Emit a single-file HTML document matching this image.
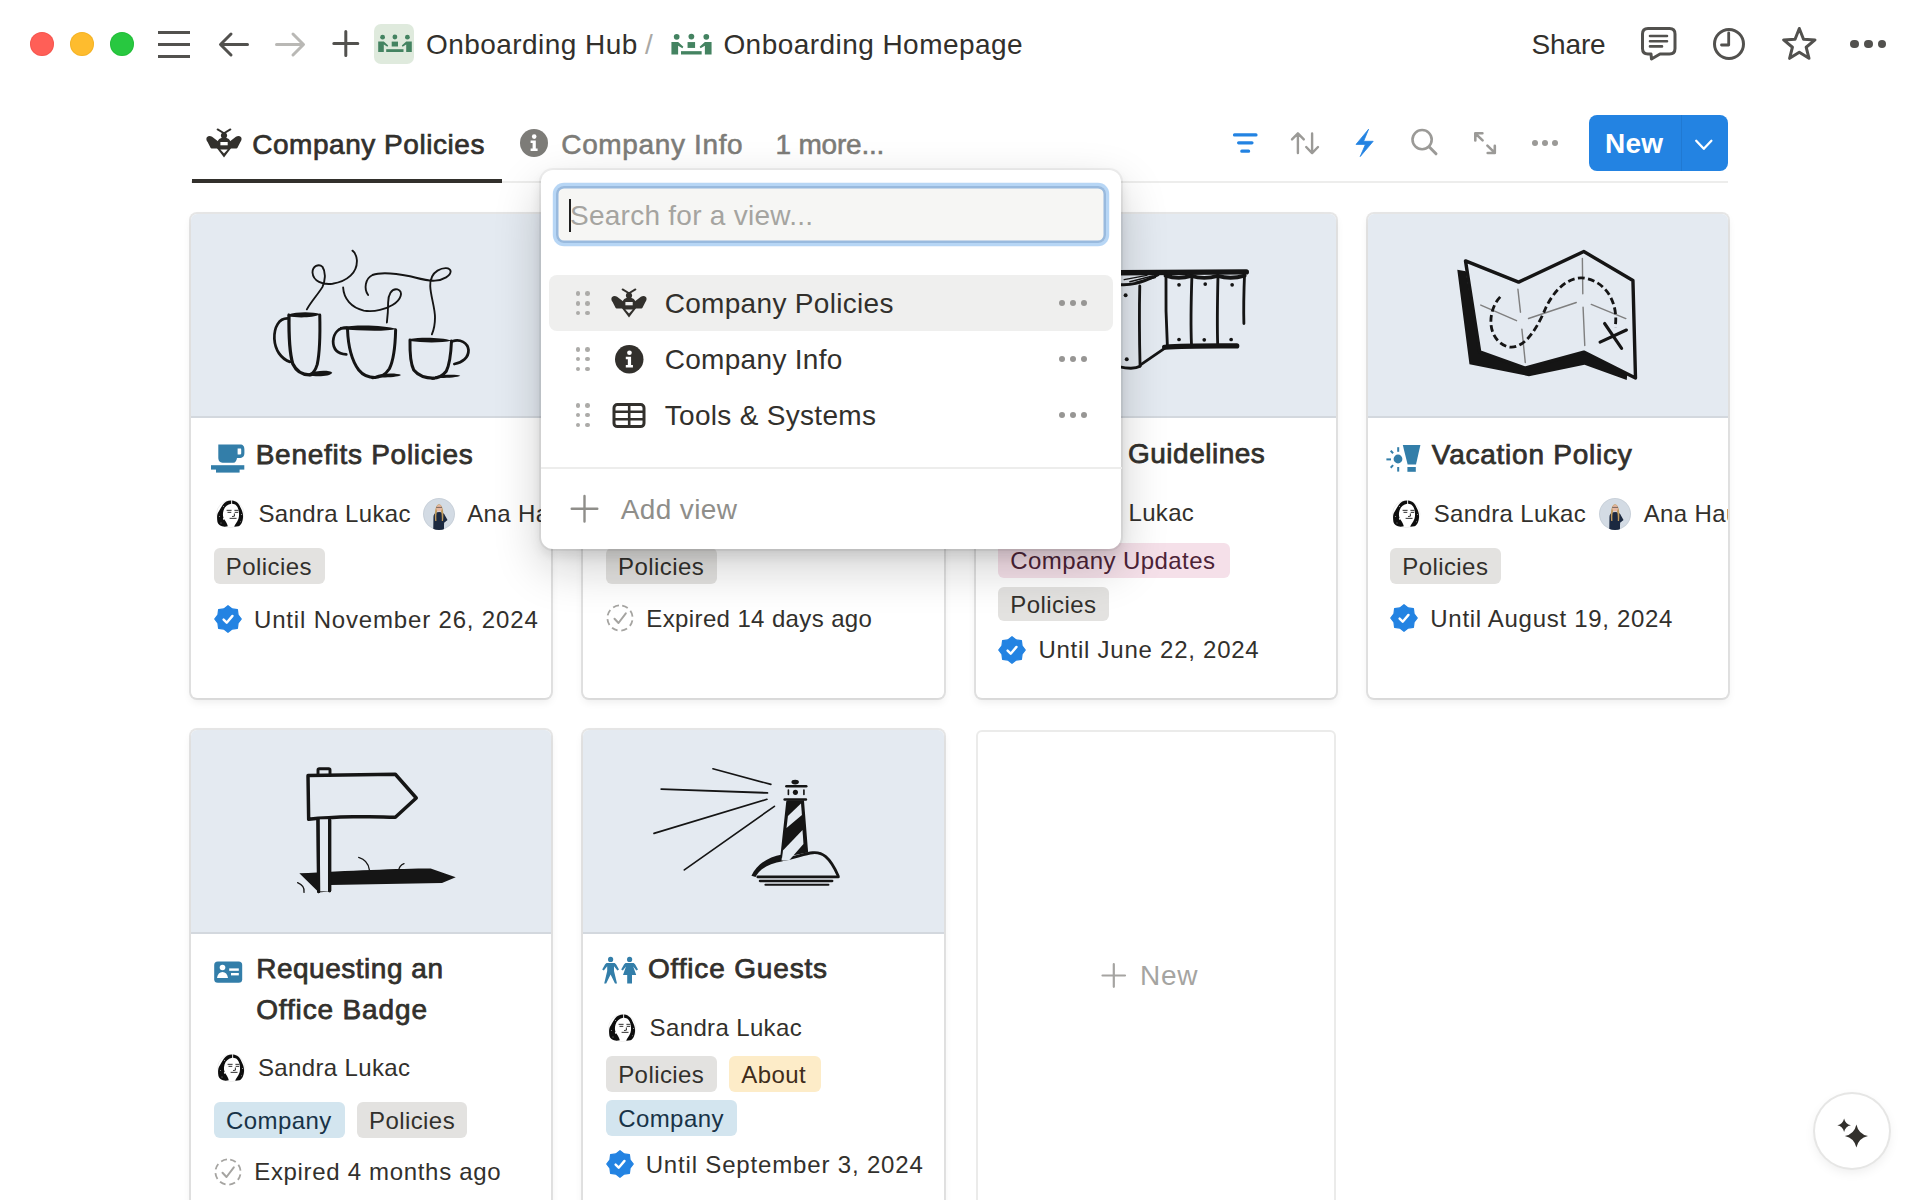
<!DOCTYPE html>
<html><head><meta charset="utf-8"><style>
html,body{margin:0;padding:0;}
body{width:1920px;height:1200px;position:relative;overflow:hidden;background:#fff;font-family:"Liberation Sans", sans-serif;color:#32302c;}
.t{position:absolute;white-space:nowrap;}
svg{display:block;}
</style></head><body>
<div style="position:absolute;left:30.00px;top:32.00px;width:24.00px;height:24.00px;border-radius:50%;background:#ff5f57;box-shadow:inset 0 0 0 1px #e2463f55;"></div><div style="position:absolute;left:70.00px;top:32.00px;width:24.00px;height:24.00px;border-radius:50%;background:#febc2e;box-shadow:inset 0 0 0 1px #e1a11655;"></div><div style="position:absolute;left:110.00px;top:32.00px;width:24.00px;height:24.00px;border-radius:50%;background:#28c840;box-shadow:inset 0 0 0 1px #1aab2955;"></div><div style="position:absolute;left:158.00px;top:30.50px;width:32.00px;height:3.00px;background:#52514e;"></div><div style="position:absolute;left:158.00px;top:42.50px;width:32.00px;height:3.00px;background:#52514e;"></div><div style="position:absolute;left:158.00px;top:54.50px;width:32.00px;height:3.00px;background:#52514e;"></div><svg style="position:absolute;left:214.00px;top:30.00px;overflow:visible;" width="40.00" height="30.00" viewBox="214 30 40 30"><path d="M247.5,44.5 H221 M231,34 L220.5,44.5 L231,55" fill="none" stroke="#52514e" stroke-width="3" stroke-linecap="round" stroke-linejoin="round"/></svg><svg style="position:absolute;left:272.00px;top:30.00px;overflow:visible;" width="40.00" height="30.00" viewBox="272 30 40 30"><path d="M276.5,44.5 H303 M293,34 L303.5,44.5 L293,55" fill="none" stroke="#b9b8b5" stroke-width="3" stroke-linecap="round" stroke-linejoin="round"/></svg><svg style="position:absolute;left:330.00px;top:28.00px;overflow:visible;" width="32.00" height="32.00" viewBox="330 28 32 32"><path d="M345.8,31.5 V55.5 M333.8,43.5 H357.8" fill="none" stroke="#52514e" stroke-width="3" stroke-linecap="round"/></svg><div style="position:absolute;left:374.00px;top:24.00px;width:40.00px;height:40.00px;border-radius:7px;background:#dfeadd;"></div><svg style="position:absolute;left:377.50px;top:33.60px;overflow:visible;" width="34.00" height="18.00" viewBox="0 0 34 18"><g fill="#448361"><circle cx="4.6" cy="3.2" r="2.4"/><circle cx="16.9" cy="3.0" r="2.4"/><circle cx="29.4" cy="3.2" r="2.4"/><path d="M0.2,7.6 H5.8 L10.2,11.6 L9.4,12.8 L5.8,10.6 V18 H0.2 Z"/><rect x="13.7" y="7.6" width="6.3" height="4.9"/><rect x="8.2" y="15.2" width="17.3" height="2.8"/><path d="M33.8,7.6 H28.2 L23.8,11.6 L24.6,12.8 L28.2,10.6 V18 H33.8 Z"/></g></svg><div class="t" style="left:426.00px;top:31.00px;font-size:28px;line-height:28px;color:#32302c;letter-spacing:0.450px;font-weight:400;">Onboarding Hub</div><div class="t" style="left:645.00px;top:31.00px;font-size:28px;line-height:28px;color:#a9a8a4;letter-spacing:0.090px;font-weight:400;">/</div><svg style="position:absolute;left:670.50px;top:32.60px;overflow:visible;" width="41.00" height="21.50" viewBox="0 0 34 18"><g fill="#448361"><circle cx="4.6" cy="3.2" r="2.4"/><circle cx="16.9" cy="3.0" r="2.4"/><circle cx="29.4" cy="3.2" r="2.4"/><path d="M0.2,7.6 H5.8 L10.2,11.6 L9.4,12.8 L5.8,10.6 V18 H0.2 Z"/><rect x="13.7" y="7.6" width="6.3" height="4.9"/><rect x="8.2" y="15.2" width="17.3" height="2.8"/><path d="M33.8,7.6 H28.2 L23.8,11.6 L24.6,12.8 L28.2,10.6 V18 H33.8 Z"/></g></svg><div class="t" style="left:723.40px;top:31.00px;font-size:28px;line-height:28px;color:#32302c;letter-spacing:0.450px;font-weight:400;">Onboarding Homepage</div><div class="t" style="left:1531.40px;top:31.00px;font-size:28px;line-height:28px;color:#32302c;letter-spacing:-0.110px;font-weight:400;">Share</div><svg style="position:absolute;left:1636.00px;top:24.00px;overflow:visible;" width="46.00" height="40.00" viewBox="1636 24 46 40"><path d="M1648,28.5 H1669.5 Q1675,28.5 1675,34 V48.5 Q1675,54 1669.5,54 H1660 L1651.5,59 L1651,54 H1648 Q1642.5,54 1642.5,48.5 V34 Q1642.5,28.5 1648,28.5 Z" fill="none" stroke="#52514e" stroke-width="3" stroke-linejoin="round"/><path d="M1650,36 H1667 M1650,41.2 H1667 M1650,46.4 H1662" stroke="#52514e" stroke-width="2.6" stroke-linecap="round"/></svg><svg style="position:absolute;left:1708.00px;top:23.00px;overflow:visible;" width="42.00" height="42.00" viewBox="1708 23 42 42"><circle cx="1729" cy="44" r="14.5" fill="none" stroke="#52514e" stroke-width="3"/><path d="M1728.7,33 V45 H1721.5" fill="none" stroke="#52514e" stroke-width="2.8" stroke-linecap="round" stroke-linejoin="round"/></svg><svg style="position:absolute;left:1776.00px;top:22.00px;overflow:visible;" width="46.00" height="46.00" viewBox="1776 22 46 46"><polygon points="1799.30,28.50 1803.53,39.18 1814.99,39.90 1806.15,47.22 1809.00,58.35 1799.30,52.20 1789.60,58.35 1792.45,47.22 1783.61,39.90 1795.07,39.18" fill="none" stroke="#52514e" stroke-width="3" stroke-linejoin="round"/></svg><div style="position:absolute;left:1850.00px;top:39.70px;width:8.60px;height:8.60px;border-radius:50%;background:#52514e;"></div><div style="position:absolute;left:1864.00px;top:39.70px;width:8.60px;height:8.60px;border-radius:50%;background:#52514e;"></div><div style="position:absolute;left:1877.50px;top:39.70px;width:8.60px;height:8.60px;border-radius:50%;background:#52514e;"></div><svg style="position:absolute;left:200.00px;top:122.00px;overflow:visible;" width="48.00" height="40.00" viewBox="0 0 48 40"><g fill="#32302c"><path d="M17.6,7.4 L24,11.2 L30.4,7.4" fill="none" stroke="#32302c" stroke-width="1.9" stroke-linecap="round" stroke-linejoin="round"/><circle cx="24" cy="13.6" r="3.1"/><path d="M17.3,27 V21.2 C17.3,17.6 20.3,15.4 24,15.4 C27.7,15.4 30.7,17.6 30.7,21.2 V27 Z"/><path d="M9.3,13.9 C6.3,14.0 5.5,17.4 7.6,20.0 L10.4,25.6 C10.7,26.4 11.3,26.6 12,26.6 L18.6,26.6 L18.6,19.8 L12.1,14.7 C11.4,14.2 10.4,13.9 9.3,13.9 Z"/><path d="M38.7,13.9 C41.7,14.0 42.5,17.4 40.4,20.0 L37.6,25.6 C37.3,26.4 36.7,26.6 36,26.6 L29.4,26.6 L29.4,19.8 L35.9,14.7 C36.6,14.2 37.6,13.9 38.7,13.9 Z"/><path d="M17.2,26.4 L24,35.6 L30.8,26.4 Z"/><rect x="20.4" y="20" width="7.3" height="3.3" fill="#ffffff"/><path d="M20.3,27.4 L24,31.4 L27.7,27.4 Z" fill="#ffffff"/></g></svg><div class="t" style="left:252.20px;top:131.00px;font-size:28px;line-height:28px;color:#32302c;letter-spacing:0.540px;font-weight:400;-webkit-text-stroke:0.7px #32302c;">Company Policies</div><div style="position:absolute;left:191.00px;top:181.00px;width:1537.00px;height:2.00px;background:#ededec;"></div><div style="position:absolute;left:192.00px;top:179.00px;width:310.00px;height:4.00px;background:#32302c;"></div><svg style="position:absolute;left:520.00px;top:129.00px;overflow:visible;" width="28.00" height="28.00" viewBox="0 0 28 28"><circle cx="14" cy="14" r="14" fill="#7d7c78"/><circle cx="14.2" cy="7.6" r="2.3" fill="#ffffff"/><path d="M10.6,11.6 H15.8 V19.6 H17.6 V22 H10.6 V19.6 H12.6 V14 H10.6 Z" fill="#ffffff"/></svg><div class="t" style="left:561.30px;top:131.00px;font-size:28px;line-height:28px;color:#7d7c78;letter-spacing:0.640px;font-weight:400;-webkit-text-stroke:0.55px #7d7c78;">Company Info</div><div class="t" style="left:775.50px;top:131.00px;font-size:28px;line-height:28px;color:#7d7c78;letter-spacing:-0.210px;font-weight:400;-webkit-text-stroke:0.55px #7d7c78;">1 more...</div><svg style="position:absolute;left:1228.00px;top:128.00px;overflow:visible;" width="34.00" height="30.00" viewBox="1228 128 34 30"><path d="M1234.5,134.9 H1256 M1238.6,142.8 H1252 M1241.8,151.2 H1248.6" stroke="#2383e2" stroke-width="3.2" stroke-linecap="round"/></svg><svg style="position:absolute;left:1286.00px;top:128.00px;overflow:visible;" width="38.00" height="30.00" viewBox="1286 128 38 30"><path d="M1297.9,133.5 V153 M1292,139.4 L1297.9,133.3 L1303.8,139.4 M1312.1,133.5 V153 M1306.2,147 L1312.1,153.2 L1318,147" fill="none" stroke="#9b9a97" stroke-width="2.4" stroke-linecap="round" stroke-linejoin="round"/></svg><svg style="position:absolute;left:1350.00px;top:126.00px;overflow:visible;" width="30.00" height="34.00" viewBox="1350 126 30 34"><path d="M1368.6,129.2 L1356,144.4 L1365.4,144.4 L1360.2,156.6 L1373.2,141.3 L1363.6,141.3 Z" fill="#2383e2" stroke="#2383e2" stroke-width="0.8" stroke-linejoin="round"/></svg><svg style="position:absolute;left:1406.00px;top:126.00px;overflow:visible;" width="36.00" height="34.00" viewBox="1406 126 36 34"><circle cx="1422.1" cy="139.6" r="9.6" fill="none" stroke="#9b9a97" stroke-width="2.6"/><path d="M1429.3,147 L1436,153.8" stroke="#9b9a97" stroke-width="3" stroke-linecap="round"/></svg><svg style="position:absolute;left:1468.00px;top:128.00px;overflow:visible;" width="34.00" height="30.00" viewBox="1468 128 34 30"><path d="M1482.6,140.4 L1475.5,133.6 M1475.3,140.4 V133.3 H1482.4 M1487.4,145.6 L1494.6,152.6 M1494.8,145.9 V153 H1487.7" fill="none" stroke="#9b9a97" stroke-width="2.6" stroke-linecap="round" stroke-linejoin="round"/></svg><div style="position:absolute;left:1531.90px;top:139.60px;width:6.40px;height:6.40px;border-radius:50%;background:#9b9a97;"></div><div style="position:absolute;left:1541.90px;top:139.60px;width:6.40px;height:6.40px;border-radius:50%;background:#9b9a97;"></div><div style="position:absolute;left:1551.90px;top:139.60px;width:6.40px;height:6.40px;border-radius:50%;background:#9b9a97;"></div><div style="position:absolute;left:1589.00px;top:115.00px;width:139.00px;height:56.00px;border-radius:8px;background:#2383e2;"></div><div style="position:absolute;left:1680.50px;top:115.00px;width:1.50px;height:56.00px;background:rgba(0,0,0,0.07);"></div><div class="t" style="left:1605.00px;top:130.00px;font-size:28px;line-height:28px;color:#ffffff;letter-spacing:0.290px;font-weight:700;">New</div><svg style="position:absolute;left:1690.00px;top:134.00px;overflow:visible;" width="26.00" height="20.00" viewBox="1690 134 26 20"><path d="M1696.2,140.8 L1703.8,148.8 L1711.4,140.8" fill="none" stroke="#fff" stroke-width="2.3" stroke-linecap="round" stroke-linejoin="round"/></svg><div style="position:absolute;left:191.00px;top:214.00px;width:360.33px;height:484.00px;border-radius:6px;background:#fff;box-shadow:0 0 0 2px rgba(15,15,15,0.1),0 4px 8px rgba(15,15,15,0.08);overflow:hidden;"></div><div style="position:absolute;left:191.00px;top:214.00px;width:360.33px;height:202.00px;border-radius:6px 6px 0 0;background:#e4eaf1;"></div><div style="position:absolute;left:191.00px;top:416.00px;width:360.33px;height:2.00px;background:#d3d8de;"></div><svg style="position:absolute;left:205.00px;top:440.70px;overflow:visible;" width="50.00" height="40.00" viewBox="0 0 50 40"><g fill="#337ea9"><path d="M13.3,3.6 H35 C38.3,3.6 39.4,5.6 39.4,8.6 V12 C39.4,15.6 37.6,17 34.4,17 H32 C31.6,19.6 30.6,21.8 28.2,21.8 H17.6 C14.6,21.8 13.3,19.6 13.3,16.6 Z"/><path d="M32.6,7.6 V13.4 H35.2 C36,13.4 36.2,13 36.2,12 V8.6 C36.2,7.8 36,7.6 35.2,7.6 Z" fill="#fff"/><rect x="6" y="24.2" width="33.3" height="4.4"/><path d="M11,28 H34.6 L34.6,31.6 H11 Z"/></g></svg><div class="t" style="left:255.70px;top:441.00px;font-size:28px;line-height:28px;color:#32302c;letter-spacing:0.728px;font-weight:400;-webkit-text-stroke:0.75px #32302c;">Benefits Policies</div><svg style="position:absolute;left:212.00px;top:496.00px;overflow:visible;" width="36.00" height="36.00" viewBox="0 0 1200 1200"><circle cx="610" cy="600" r="455" fill="#fff" stroke="rgba(0,0,0,0.07)" stroke-width="30"/><path d="M640,150 C520,150 420,200 360,290 C290,390 250,480 200,560 C160,640 165,760 180,860 C200,960 300,1020 420,1022 L525,1012 C520,950 480,880 425,800 C365,720 345,600 385,480 C425,360 520,285 640,262 Z" fill="#0d0d0d"/><path d="M670,150 C800,160 900,250 950,380 C1000,480 1035,560 1035,680 C1035,820 985,960 885,1010 L740,1022 C760,950 840,880 882,760 C922,640 902,420 822,330 C772,280 722,266 670,262 Z" fill="#0d0d0d"/><g fill="#fff"><circle cx="390" cy="760" r="28"/><circle cx="245" cy="680" r="16"/><circle cx="385" cy="350" r="16"/><circle cx="985" cy="620" r="16"/><circle cx="300" cy="900" r="14"/><circle cx="950" cy="860" r="14"/></g><path d="M500,478 H640 M760,478 H868 M530,545 H630 M770,545 H860 M745,595 L748,672 L682,682 M600,745 H805" stroke="#161616" stroke-width="30" fill="none" stroke-linecap="round"/></svg><div class="t" style="left:258.40px;top:502.00px;font-size:24px;line-height:24px;color:#32302c;letter-spacing:0.360px;font-weight:400;">Sandra Lukac</div><svg style="position:absolute;left:422.50px;top:497.80px;overflow:visible;" width="32.00" height="32.00" viewBox="0 0 30 30"><defs><clipPath id="ac422"><circle cx="15" cy="15" r="15"/></clipPath></defs><g clip-path="url(#ac422)"><rect width="30" height="30" fill="#d3dbe4"/><path d="M9.6,30 L9.8,18 C10,14.5 12,13.4 15,13.2 C18,13.4 20,14.5 20.6,16.5 L23,20.6 L19.8,23.2 L19.6,30 Z" fill="#1b2940"/><path d="M11.4,21.5 C10.6,14 11.4,6.2 15,5.8 C18.8,6.2 19.6,14 18.8,21.5 L17.6,21.5 C17.8,16 17.4,11 15,11 C12.6,11 12.4,16 12.6,21.5 Z" fill="#c09a5c"/><ellipse cx="15.1" cy="9.6" rx="2.6" ry="3.1" fill="#e6b8a2"/><path d="M12.4,8.8 H17.8" stroke="#333" stroke-width="0.6"/></g><circle cx="15" cy="15" r="14.6" fill="none" stroke="rgba(0,0,0,0.06)" stroke-width="0.8"/></svg><div style="position:absolute;left:191px;top:490px;width:360px;height:40px;overflow:hidden;"><div class="t" style="left:276.20px;top:12.00px;font-size:24px;line-height:24px;color:#32302c;letter-spacing:0.360px;font-weight:400;">Ana Hauptmann</div></div><div style="position:absolute;left:213.80px;top:548.00px;width:110.90px;height:35.50px;border-radius:6px;background:#e3e2e0;"></div><div class="t" style="left:225.80px;top:555.00px;font-size:24px;line-height:24px;color:#32302c;letter-spacing:0.420px;font-weight:400;">Policies</div><svg style="position:absolute;left:213.80px;top:605.00px;overflow:visible;" width="28.00" height="28.00" viewBox="0 0 28 28"><polygon points="14.00,0.70 18.17,3.93 23.40,4.60 24.07,9.83 27.30,14.00 24.07,18.17 23.40,23.40 18.17,24.07 14.00,27.30 9.83,24.07 4.60,23.40 3.93,18.17 0.70,14.00 3.93,9.83 4.60,4.60 9.83,3.93" fill="#2383e2" stroke="#2383e2" stroke-width="1.2" stroke-linejoin="round"/><path d="M9.6,14.6 L12.7,17.7 L18.5,10.9" fill="none" stroke="#fff" stroke-width="2.4" stroke-linecap="round" stroke-linejoin="round"/></svg><div class="t" style="left:254.00px;top:608.00px;font-size:24px;line-height:24px;color:#32302c;letter-spacing:0.830px;font-weight:400;">Until November 26, 2024</div><div style="position:absolute;left:583.33px;top:214.00px;width:360.33px;height:484.00px;border-radius:6px;background:#fff;box-shadow:0 0 0 2px rgba(15,15,15,0.1),0 4px 8px rgba(15,15,15,0.08);overflow:hidden;"></div><div style="position:absolute;left:583.33px;top:214.00px;width:360.33px;height:202.00px;border-radius:6px 6px 0 0;background:#e4eaf1;"></div><div style="position:absolute;left:583.33px;top:416.00px;width:360.33px;height:2.00px;background:#d3d8de;"></div><div style="position:absolute;left:606.10px;top:548.00px;width:110.60px;height:35.50px;border-radius:6px;background:#e3e2e0;"></div><div class="t" style="left:618.10px;top:555.00px;font-size:24px;line-height:24px;color:#32302c;letter-spacing:0.420px;font-weight:400;">Policies</div><svg style="position:absolute;left:606.00px;top:604.00px;overflow:visible;" width="28.00" height="28.00" viewBox="0 0 28 28"><circle cx="14" cy="14" r="12.6" fill="none" stroke="#a5a4a1" stroke-width="1.8" stroke-dasharray="6.1 3.8" transform="rotate(-80 14 14)"/><path d="M8.5,14.7 L12.5,19 L19.8,9.4" fill="none" stroke="#a5a4a1" stroke-width="2" stroke-linecap="round" stroke-linejoin="round"/></svg><div class="t" style="left:646.30px;top:607.00px;font-size:24px;line-height:24px;color:#32302c;letter-spacing:0.380px;font-weight:400;">Expired 14 days ago</div><div style="position:absolute;left:975.67px;top:214.00px;width:360.33px;height:484.00px;border-radius:6px;background:#fff;box-shadow:0 0 0 2px rgba(15,15,15,0.1),0 4px 8px rgba(15,15,15,0.08);overflow:hidden;"></div><div style="position:absolute;left:975.67px;top:214.00px;width:360.33px;height:202.00px;border-radius:6px 6px 0 0;background:#e4eaf1;"></div><div style="position:absolute;left:975.67px;top:416.00px;width:360.33px;height:2.00px;background:#d3d8de;"></div><div class="t" style="left:1128.00px;top:440.00px;font-size:28px;line-height:28px;color:#32302c;letter-spacing:0.497px;font-weight:400;-webkit-text-stroke:0.75px #32302c;">Guidelines</div><div class="t" style="left:1128.60px;top:501.00px;font-size:24px;line-height:24px;color:#32302c;letter-spacing:0.290px;font-weight:400;">Lukac</div><div style="position:absolute;left:998.30px;top:542.50px;width:231.70px;height:35.00px;border-radius:6px;background:#f5e0e9;"></div><div class="t" style="left:1010.30px;top:549.00px;font-size:24px;line-height:24px;color:#4c2337;letter-spacing:0.420px;font-weight:400;">Company Updates</div><div style="position:absolute;left:998.30px;top:586.70px;width:110.50px;height:34.60px;border-radius:6px;background:#e3e2e0;"></div><div class="t" style="left:1010.30px;top:593.00px;font-size:24px;line-height:24px;color:#32302c;letter-spacing:0.420px;font-weight:400;">Policies</div><svg style="position:absolute;left:998.30px;top:636.20px;overflow:visible;" width="28.00" height="28.00" viewBox="0 0 28 28"><polygon points="14.00,0.70 18.17,3.93 23.40,4.60 24.07,9.83 27.30,14.00 24.07,18.17 23.40,23.40 18.17,24.07 14.00,27.30 9.83,24.07 4.60,23.40 3.93,18.17 0.70,14.00 3.93,9.83 4.60,4.60 9.83,3.93" fill="#2383e2" stroke="#2383e2" stroke-width="1.2" stroke-linejoin="round"/><path d="M9.6,14.6 L12.7,17.7 L18.5,10.9" fill="none" stroke="#fff" stroke-width="2.4" stroke-linecap="round" stroke-linejoin="round"/></svg><div class="t" style="left:1038.40px;top:638.00px;font-size:24px;line-height:24px;color:#32302c;letter-spacing:0.750px;font-weight:400;">Until June 22, 2024</div><div style="position:absolute;left:1368.00px;top:214.00px;width:360.33px;height:484.00px;border-radius:6px;background:#fff;box-shadow:0 0 0 2px rgba(15,15,15,0.1),0 4px 8px rgba(15,15,15,0.08);overflow:hidden;"></div><div style="position:absolute;left:1368.00px;top:214.00px;width:360.33px;height:202.00px;border-radius:6px 6px 0 0;background:#e4eaf1;"></div><div style="position:absolute;left:1368.00px;top:416.00px;width:360.33px;height:2.00px;background:#d3d8de;"></div><svg style="position:absolute;left:1380.00px;top:440.50px;overflow:visible;" width="50.00" height="40.00" viewBox="0 0 50 40"><g fill="#337ea9"><path d="M22.8,4 H40.4 L36,23.4 H27.6 Z"/><rect x="27.4" y="26" width="8.4" height="4.8"/><circle cx="18" cy="18" r="4.4"/><rect x="17.2" y="6.2" width="2" height="4.6"/><rect x="17.2" y="26" width="2" height="4.6"/><rect x="6.4" y="17.4" width="4.6" height="2"/><path d="M10,10.4 L11.4,9 L13.8,11.6 L12.4,13 Z"/><path d="M10,26 L11.4,27.4 L13.8,24.8 L12.4,23.4 Z"/></g></svg><div class="t" style="left:1431.80px;top:441.00px;font-size:28px;line-height:28px;color:#32302c;letter-spacing:0.752px;font-weight:400;-webkit-text-stroke:0.75px #32302c;">Vacation Policy</div><svg style="position:absolute;left:1388.00px;top:496.30px;overflow:visible;" width="36.00" height="36.00" viewBox="0 0 1200 1200"><circle cx="610" cy="600" r="455" fill="#fff" stroke="rgba(0,0,0,0.07)" stroke-width="30"/><path d="M640,150 C520,150 420,200 360,290 C290,390 250,480 200,560 C160,640 165,760 180,860 C200,960 300,1020 420,1022 L525,1012 C520,950 480,880 425,800 C365,720 345,600 385,480 C425,360 520,285 640,262 Z" fill="#0d0d0d"/><path d="M670,150 C800,160 900,250 950,380 C1000,480 1035,560 1035,680 C1035,820 985,960 885,1010 L740,1022 C760,950 840,880 882,760 C922,640 902,420 822,330 C772,280 722,266 670,262 Z" fill="#0d0d0d"/><g fill="#fff"><circle cx="390" cy="760" r="28"/><circle cx="245" cy="680" r="16"/><circle cx="385" cy="350" r="16"/><circle cx="985" cy="620" r="16"/><circle cx="300" cy="900" r="14"/><circle cx="950" cy="860" r="14"/></g><path d="M500,478 H640 M760,478 H868 M530,545 H630 M770,545 H860 M745,595 L748,672 L682,682 M600,745 H805" stroke="#161616" stroke-width="30" fill="none" stroke-linecap="round"/></svg><div class="t" style="left:1433.70px;top:502.00px;font-size:24px;line-height:24px;color:#32302c;letter-spacing:0.360px;font-weight:400;">Sandra Lukac</div><svg style="position:absolute;left:1599.00px;top:497.80px;overflow:visible;" width="32.00" height="32.00" viewBox="0 0 30 30"><defs><clipPath id="ac1599"><circle cx="15" cy="15" r="15"/></clipPath></defs><g clip-path="url(#ac1599)"><rect width="30" height="30" fill="#d3dbe4"/><path d="M9.6,30 L9.8,18 C10,14.5 12,13.4 15,13.2 C18,13.4 20,14.5 20.6,16.5 L23,20.6 L19.8,23.2 L19.6,30 Z" fill="#1b2940"/><path d="M11.4,21.5 C10.6,14 11.4,6.2 15,5.8 C18.8,6.2 19.6,14 18.8,21.5 L17.6,21.5 C17.8,16 17.4,11 15,11 C12.6,11 12.4,16 12.6,21.5 Z" fill="#c09a5c"/><ellipse cx="15.1" cy="9.6" rx="2.6" ry="3.1" fill="#e6b8a2"/><path d="M12.4,8.8 H17.8" stroke="#333" stroke-width="0.6"/></g><circle cx="15" cy="15" r="14.6" fill="none" stroke="rgba(0,0,0,0.06)" stroke-width="0.8"/></svg><div style="position:absolute;left:1368px;top:490px;width:360.33px;height:40px;overflow:hidden;"><div class="t" style="left:275.70px;top:12.00px;font-size:24px;line-height:24px;color:#32302c;letter-spacing:0.360px;font-weight:400;">Ana Hauptmann</div></div><div style="position:absolute;left:1390.25px;top:548.10px;width:110.45px;height:35.50px;border-radius:6px;background:#e3e2e0;"></div><div class="t" style="left:1402.25px;top:555.00px;font-size:24px;line-height:24px;color:#32302c;letter-spacing:0.420px;font-weight:400;">Policies</div><svg style="position:absolute;left:1390.25px;top:604.40px;overflow:visible;" width="28.00" height="28.00" viewBox="0 0 28 28"><polygon points="14.00,0.70 18.17,3.93 23.40,4.60 24.07,9.83 27.30,14.00 24.07,18.17 23.40,23.40 18.17,24.07 14.00,27.30 9.83,24.07 4.60,23.40 3.93,18.17 0.70,14.00 3.93,9.83 4.60,4.60 9.83,3.93" fill="#2383e2" stroke="#2383e2" stroke-width="1.2" stroke-linejoin="round"/><path d="M9.6,14.6 L12.7,17.7 L18.5,10.9" fill="none" stroke="#fff" stroke-width="2.4" stroke-linecap="round" stroke-linejoin="round"/></svg><div class="t" style="left:1430.30px;top:607.00px;font-size:24px;line-height:24px;color:#32302c;letter-spacing:0.700px;font-weight:400;">Until August 19, 2024</div><div style="position:absolute;left:191.00px;top:729.50px;width:360.33px;height:500.00px;border-radius:6px;background:#fff;box-shadow:0 0 0 2px rgba(15,15,15,0.1),0 4px 8px rgba(15,15,15,0.08);overflow:hidden;"></div><div style="position:absolute;left:191.00px;top:729.50px;width:360.33px;height:202.00px;border-radius:6px 6px 0 0;background:#e4eaf1;"></div><div style="position:absolute;left:191.00px;top:931.50px;width:360.33px;height:2.00px;background:#d3d8de;"></div><svg style="position:absolute;left:208.00px;top:950.00px;overflow:visible;" width="40.00" height="40.00" viewBox="0 0 40 40"><rect x="6.2" y="11.4" width="28" height="21.4" rx="3.6" fill="#337ea9"/><g fill="#fff"><circle cx="14.5" cy="17.5" r="2.8"/><path d="M9,28 C9.5,24 11.6,22 14.5,22 C17.4,22 19.5,24 20,28 Z"/><rect x="21.2" y="18.4" width="9.6" height="2.4"/><rect x="23" y="23" width="7.8" height="2.4"/></g></svg><div class="t" style="left:256.20px;top:955.00px;font-size:28px;line-height:28px;color:#32302c;letter-spacing:0.519px;font-weight:400;-webkit-text-stroke:0.75px #32302c;">Requesting an</div><div class="t" style="left:256.20px;top:996.00px;font-size:28px;line-height:28px;color:#32302c;letter-spacing:0.856px;font-weight:400;-webkit-text-stroke:0.75px #32302c;">Office Badge</div><svg style="position:absolute;left:212.50px;top:1049.60px;overflow:visible;" width="36.00" height="36.00" viewBox="0 0 1200 1200"><circle cx="610" cy="600" r="455" fill="#fff" stroke="rgba(0,0,0,0.07)" stroke-width="30"/><path d="M640,150 C520,150 420,200 360,290 C290,390 250,480 200,560 C160,640 165,760 180,860 C200,960 300,1020 420,1022 L525,1012 C520,950 480,880 425,800 C365,720 345,600 385,480 C425,360 520,285 640,262 Z" fill="#0d0d0d"/><path d="M670,150 C800,160 900,250 950,380 C1000,480 1035,560 1035,680 C1035,820 985,960 885,1010 L740,1022 C760,950 840,880 882,760 C922,640 902,420 822,330 C772,280 722,266 670,262 Z" fill="#0d0d0d"/><g fill="#fff"><circle cx="390" cy="760" r="28"/><circle cx="245" cy="680" r="16"/><circle cx="385" cy="350" r="16"/><circle cx="985" cy="620" r="16"/><circle cx="300" cy="900" r="14"/><circle cx="950" cy="860" r="14"/></g><path d="M500,478 H640 M760,478 H868 M530,545 H630 M770,545 H860 M745,595 L748,672 L682,682 M600,745 H805" stroke="#161616" stroke-width="30" fill="none" stroke-linecap="round"/></svg><div class="t" style="left:257.90px;top:1056.00px;font-size:24px;line-height:24px;color:#32302c;letter-spacing:0.360px;font-weight:400;">Sandra Lukac</div><div style="position:absolute;left:214.00px;top:1102.00px;width:130.90px;height:35.50px;border-radius:6px;background:#d3e5ef;"></div><div class="t" style="left:226.00px;top:1109.00px;font-size:24px;line-height:24px;color:#183347;letter-spacing:0.420px;font-weight:400;">Company</div><div style="position:absolute;left:357.00px;top:1102.00px;width:109.80px;height:35.50px;border-radius:6px;background:#e3e2e0;"></div><div class="t" style="left:369.00px;top:1109.00px;font-size:24px;line-height:24px;color:#32302c;letter-spacing:0.420px;font-weight:400;">Policies</div><svg style="position:absolute;left:213.80px;top:1158.00px;overflow:visible;" width="28.00" height="28.00" viewBox="0 0 28 28"><circle cx="14" cy="14" r="12.6" fill="none" stroke="#a5a4a1" stroke-width="1.8" stroke-dasharray="6.1 3.8" transform="rotate(-80 14 14)"/><path d="M8.5,14.7 L12.5,19 L19.8,9.4" fill="none" stroke="#a5a4a1" stroke-width="2" stroke-linecap="round" stroke-linejoin="round"/></svg><div class="t" style="left:254.20px;top:1160.00px;font-size:24px;line-height:24px;color:#32302c;letter-spacing:0.680px;font-weight:400;">Expired 4 months ago</div><div style="position:absolute;left:583.33px;top:729.50px;width:360.33px;height:500.00px;border-radius:6px;background:#fff;box-shadow:0 0 0 2px rgba(15,15,15,0.1),0 4px 8px rgba(15,15,15,0.08);overflow:hidden;"></div><div style="position:absolute;left:583.33px;top:729.50px;width:360.33px;height:202.00px;border-radius:6px 6px 0 0;background:#e4eaf1;"></div><div style="position:absolute;left:583.33px;top:931.50px;width:360.33px;height:2.00px;background:#d3d8de;"></div><svg style="position:absolute;left:598.00px;top:952.00px;overflow:visible;" width="45.00" height="40.00" viewBox="0 0 45 40"><g fill="#337ea9"><circle cx="12.6" cy="7.4" r="2.6"/><path d="M9.4,11 H15.8 C17,11 17.6,11.6 18.2,12.6 L21,17.6 L19.4,18.6 L16,14.2 L16,19 L19,31.4 H17 L12.6,22.6 L8.2,31.4 H6.2 L9.2,19 L9.2,14.2 L5.8,18.6 L4.2,17.6 L7,12.6 C7.6,11.6 8.2,11 9.4,11 Z"/><circle cx="31.6" cy="7.4" r="2.6"/><path d="M28.4,11 H34.8 C36,11 36.6,11.6 37.2,12.6 L40,17.6 L38.4,18.6 L35.2,14.4 L38.2,23 H34 V31.4 H29.2 V23 H25 L28,14.4 L24.8,18.6 L23.2,17.6 L26,12.6 C26.6,11.6 27.2,11 28.4,11 Z"/></g></svg><div class="t" style="left:647.90px;top:955.00px;font-size:28px;line-height:28px;color:#32302c;letter-spacing:0.841px;font-weight:400;-webkit-text-stroke:0.75px #32302c;">Office Guests</div><svg style="position:absolute;left:604.20px;top:1009.60px;overflow:visible;" width="36.00" height="36.00" viewBox="0 0 1200 1200"><circle cx="610" cy="600" r="455" fill="#fff" stroke="rgba(0,0,0,0.07)" stroke-width="30"/><path d="M640,150 C520,150 420,200 360,290 C290,390 250,480 200,560 C160,640 165,760 180,860 C200,960 300,1020 420,1022 L525,1012 C520,950 480,880 425,800 C365,720 345,600 385,480 C425,360 520,285 640,262 Z" fill="#0d0d0d"/><path d="M670,150 C800,160 900,250 950,380 C1000,480 1035,560 1035,680 C1035,820 985,960 885,1010 L740,1022 C760,950 840,880 882,760 C922,640 902,420 822,330 C772,280 722,266 670,262 Z" fill="#0d0d0d"/><g fill="#fff"><circle cx="390" cy="760" r="28"/><circle cx="245" cy="680" r="16"/><circle cx="385" cy="350" r="16"/><circle cx="985" cy="620" r="16"/><circle cx="300" cy="900" r="14"/><circle cx="950" cy="860" r="14"/></g><path d="M500,478 H640 M760,478 H868 M530,545 H630 M770,545 H860 M745,595 L748,672 L682,682 M600,745 H805" stroke="#161616" stroke-width="30" fill="none" stroke-linecap="round"/></svg><div class="t" style="left:649.60px;top:1016.00px;font-size:24px;line-height:24px;color:#32302c;letter-spacing:0.360px;font-weight:400;">Sandra Lukac</div><div style="position:absolute;left:606.20px;top:1056.30px;width:110.50px;height:35.30px;border-radius:6px;background:#e3e2e0;"></div><div class="t" style="left:618.20px;top:1063.00px;font-size:24px;line-height:24px;color:#32302c;letter-spacing:0.420px;font-weight:400;">Policies</div><div style="position:absolute;left:729.30px;top:1056.30px;width:91.40px;height:35.30px;border-radius:6px;background:#fdecc8;"></div><div class="t" style="left:741.30px;top:1063.00px;font-size:24px;line-height:24px;color:#402c1b;letter-spacing:0.420px;font-weight:400;">About</div><div style="position:absolute;left:606.20px;top:1100.30px;width:130.70px;height:35.30px;border-radius:6px;background:#d3e5ef;"></div><div class="t" style="left:618.20px;top:1107.00px;font-size:24px;line-height:24px;color:#183347;letter-spacing:0.420px;font-weight:400;">Company</div><svg style="position:absolute;left:606.00px;top:1150.00px;overflow:visible;" width="28.00" height="28.00" viewBox="0 0 28 28"><polygon points="14.00,0.70 18.17,3.93 23.40,4.60 24.07,9.83 27.30,14.00 24.07,18.17 23.40,23.40 18.17,24.07 14.00,27.30 9.83,24.07 4.60,23.40 3.93,18.17 0.70,14.00 3.93,9.83 4.60,4.60 9.83,3.93" fill="#2383e2" stroke="#2383e2" stroke-width="1.2" stroke-linejoin="round"/><path d="M9.6,14.6 L12.7,17.7 L18.5,10.9" fill="none" stroke="#fff" stroke-width="2.4" stroke-linecap="round" stroke-linejoin="round"/></svg><div class="t" style="left:645.70px;top:1153.00px;font-size:24px;line-height:24px;color:#32302c;letter-spacing:0.830px;font-weight:400;">Until September 3, 2024</div><div style="position:absolute;left:976.00px;top:729.50px;width:360.00px;height:500.00px;box-sizing:border-box;border:2px solid #ebebea;border-radius:6px;background:#fff;"></div><svg style="position:absolute;left:1100.00px;top:961.00px;overflow:visible;" width="28.00" height="28.00" viewBox="1100 961 28 28"><path d="M1113.8,964.2 V986.8 M1102.5,975.5 H1125" stroke="#a5a4a1" stroke-width="2.2" stroke-linecap="round"/></svg><div class="t" style="left:1140.00px;top:962.00px;font-size:28px;line-height:28px;color:#a5a4a1;letter-spacing:0.690px;font-weight:400;">New</div><div style="position:absolute;left:1815.00px;top:1094.00px;width:74.00px;height:74.00px;box-sizing:border-box;border-radius:50%;background:#fff;box-shadow:0 0 0 2px #e6e6e5,0 4px 12px rgba(15,15,15,0.08);"></div><svg style="position:absolute;left:1815.00px;top:1094.00px;overflow:visible;" width="74.00" height="74.00" viewBox="1815 1094 74 74"><path d="M1856.4,1124.4 Q1858.43,1133.97 1868.0,1136 Q1858.43,1138.03 1856.4,1147.6 Q1854.3700000000001,1138.03 1844.8000000000002,1136 Q1854.3700000000001,1133.97 1856.4,1124.4 Z M1844.1,1118.4 Q1845.29,1124.01 1850.8999999999999,1125.2 Q1845.29,1126.39 1844.1,1132.0 Q1842.9099999999999,1126.39 1837.3,1125.2 Q1842.9099999999999,1124.01 1844.1,1118.4 Z" fill="#32302c"/></svg><svg style="position:absolute;left:260.00px;top:240.00px;overflow:visible;" width="220.00" height="150.00" viewBox="0 0 1760 1200"><g fill="none" stroke="#151515" stroke-linecap="round" stroke-linejoin="round"><path d="M232,600 C230,760 235,900 262,990 C295,1060 350,1082 410,1078" stroke-width="26"/><path d="M478,600 C482,760 478,900 458,995 C442,1048 425,1068 400,1078" stroke-width="24"/><path d="M228,628 C150,622 112,700 115,790 C120,880 168,950 240,975" stroke-width="22"/><path d="M700,712 C705,850 730,960 790,1040 C830,1090 880,1100 920,1100" stroke-width="24"/><path d="M1085,720 C1082,850 1070,960 1035,1030 C1000,1085 960,1100 900,1102" stroke-width="24"/><path d="M700,702 C630,700 590,740 585,810 C585,870 620,910 690,915" stroke-width="22"/><path d="M1200,800 C1198,900 1200,980 1230,1040 C1270,1090 1330,1105 1390,1105" stroke-width="24"/><path d="M1532,808 C1528,900 1520,990 1490,1050 C1460,1090 1420,1105 1380,1107" stroke-width="24"/><path d="M1540,810 C1600,790 1662,820 1668,880 C1670,940 1620,980 1555,992" stroke-width="22"/><path d="M375,555 C410,490 460,440 500,375 C520,330 530,260 500,215 C470,185 420,210 420,260 C425,330 500,360 580,350 C700,330 780,260 775,160 C770,120 755,95 740,85" stroke-width="15"/><path d="M665,380 C670,470 730,540 830,565 C920,580 1010,550 1060,520 C1130,480 1150,410 1100,395 C1050,385 1025,440 1025,500 C1025,560 1020,620 1015,660" stroke-width="15"/><path d="M865,440 C830,390 840,310 900,280 C980,250 1100,270 1200,290 C1280,310 1340,330 1400,325 C1470,320 1525,285 1525,250 C1520,220 1470,215 1420,245 C1380,270 1360,320 1362,370 C1365,450 1400,540 1400,620 C1400,680 1390,720 1375,755" stroke-width="15"/></g><g fill="#151515"><path d="M222,598 C300,572 420,574 484,594 C420,624 300,624 222,610 Z"/><path d="M640,696 C800,672 1000,684 1096,710 C1000,736 800,726 640,712 Z"/><path d="M1196,792 C1300,774 1450,780 1534,804 C1450,826 1300,822 1196,808 Z"/><path d="M390,1068 C450,1042 560,1040 578,1062 C565,1092 450,1098 390,1082 Z"/><path d="M920,1088 C980,1062 1100,1064 1128,1080 C1100,1100 980,1102 920,1098 Z"/><path d="M1400,1092 C1450,1076 1580,1074 1602,1086 C1580,1102 1450,1106 1400,1102 Z"/></g></svg><svg style="position:absolute;left:1110.00px;top:230.00px;overflow:visible;" width="160.00" height="170.00" viewBox="0 0 1129 1200"><g fill="none" stroke="#151515" stroke-linecap="round" stroke-linejoin="round"><path d="M60,302 L962,296" stroke-width="38"/><path d="M392,322 Q482,352 572,324 Q665,352 760,324 Q852,352 950,322" stroke-width="28"/><path d="M395,312 C392,500 398,700 405,822" stroke-width="20"/><path d="M578,322 C572,500 570,700 575,808" stroke-width="20"/><path d="M762,322 C758,500 756,700 760,812" stroke-width="20"/><path d="M950,300 C945,420 942,560 945,660" stroke-width="20"/><path d="M385,828 C550,815 750,818 895,818" stroke-width="36"/><path d="M395,828 L215,952" stroke-width="20"/><path d="M210,395 C205,600 208,800 212,960" stroke-width="20"/><path d="M60,385 C140,392 210,380 340,315" stroke-width="20"/><path d="M100,350 L260,320 M140,365 L300,325 M180,370 L320,335" stroke-width="10"/><path d="M60,965 C130,980 185,978 212,962" stroke-width="20"/></g><g fill="#151515"><circle cx="487" cy="387" r="13"/><circle cx="672" cy="382" r="13"/><circle cx="862" cy="387" r="13"/><circle cx="487" cy="773" r="13"/><circle cx="665" cy="775" r="13"/><circle cx="855" cy="773" r="13"/><circle cx="110" cy="460" r="14"/><circle cx="118" cy="912" r="14"/></g></svg><svg style="position:absolute;left:1440.00px;top:230.00px;overflow:visible;" width="220.00" height="170.00" viewBox="0 0 1553 1200"><path d="M122,280 L182,292 L280,862 L602,978 L1015,862 L1322,1022 L1318,1058 L1020,952 L628,1032 L208,948 Z" fill="#151515"/><g fill="none" stroke="#151515" stroke-linecap="round" stroke-linejoin="round"><path d="M180,218 L555,368 L1015,152 L1362,356 L1380,1045 L1015,862 L600,975 L280,860 Z" stroke-width="24"/></g><g fill="none" stroke="#7f7f7f" stroke-width="10" stroke-linecap="round"><path d="M550,418 L568,580 M578,700 L602,935 M1005,200 L1008,450 M1010,545 L1022,815"/><path d="M288,530 L540,640 M625,625 L962,512 M1068,525 L1312,625"/></g><path d="M425,472 C340,560 320,760 470,822 C600,862 700,662 750,542 C830,382 940,322 1030,342 C1180,372 1262,522 1236,690" fill="none" stroke="#151515" stroke-width="20" stroke-dasharray="48 24"/><path d="M1162,660 L1282,836 M1130,792 L1316,706" fill="none" stroke="#151515" stroke-width="22" stroke-linecap="round"/></svg><svg style="position:absolute;left:280.00px;top:750.00px;overflow:visible;" width="200.00" height="160.00" viewBox="0 0 1500 1200"><g fill="none" stroke="#151515" stroke-linecap="round" stroke-linejoin="round"><path d="M210,192 L865,182 L1022,360 L865,505 C700,495 400,500 215,520 Z" stroke-width="26"/><path d="M285,190 V150 Q285,140 295,140 H365 Q375,140 375,150 V190" stroke-width="22"/><path d="M285,525 L290,1062 M372,525 L372,1055" stroke-width="24"/><path d="M590,805 C640,820 665,860 670,898 M930,852 C905,862 892,882 890,905 M132,995 C168,1010 185,1038 180,1068" stroke-width="10"/></g><path d="M145,925 C500,905 900,888 1130,888 L1318,955 L1215,998 L380,1012 L378,1060 L292,1068 Z" fill="#151515"/><path d="M298,520 H362 V1060 H298 Z" fill="#e4eaf1"/><path d="M285,525 L290,1062 M372,525 L372,1055" fill="none" stroke="#151515" stroke-width="24" stroke-linecap="round"/></svg><svg style="position:absolute;left:640.00px;top:755.00px;overflow:visible;" width="210.00" height="140.00" viewBox="0 0 1800 1200"><g fill="none" stroke="#151515" stroke-linecap="round"><path d="M625,118 L1122,252" stroke-width="14"/><path d="M182,292 L1092,325" stroke-width="16"/><path d="M120,672 L1088,380" stroke-width="14"/><path d="M380,985 L1152,440" stroke-width="14"/><path d="M1255,268 H1425" stroke-width="22"/><path d="M1272,300 V338 M1405,300 V338" stroke-width="14"/><path d="M1240,382 H1422" stroke-width="22"/><path d="M1010,1045 H1700" stroke-width="24"/><path d="M1028,1080 H1648" stroke-width="20"/><path d="M1075,1112 H1615" stroke-width="18"/><path d="M1215,895 C1300,895 1400,845 1480,838 C1560,830 1625,870 1698,1035" stroke-width="24"/></g><g fill="#151515"><ellipse cx="1330" cy="232" rx="32" ry="20"/><circle cx="1332" cy="320" r="22"/><path d="M1262,395 H1398 L1435,835 L1212,880 Z"/><path d="M955,1035 C1000,940 1100,868 1218,852 L1224,910 C1110,925 1025,975 990,1045 Z"/></g><g fill="#e4eaf1"><path d="M1380,416 L1388,514 L1256,626 L1268,523 Z"/><path d="M1393,643 L1401,763 L1281,900 L1213,904 L1221,823 Z"/></g><path d="M1262,395 H1398 L1433,835 M1262,395 L1210,880" fill="none" stroke="#151515" stroke-width="16"/></svg><div style="position:absolute;left:541.00px;top:170.00px;width:580.00px;height:378.50px;border-radius:12px;background:#fff;box-shadow:0 0 0 2px rgba(15,15,15,0.05),0 6px 12px rgba(15,15,15,0.1),0 18px 48px rgba(15,15,15,0.2);"></div><div style="position:absolute;left:556.00px;top:186.00px;width:550.00px;height:57.00px;box-sizing:border-box;border-radius:8px;background:#f6f6f4;box-shadow:inset 0 0 0 2.5px rgba(60,125,200,0.5),0 0 0 3.2px rgba(35,131,226,0.33);"></div><div style="position:absolute;left:569.00px;top:199.00px;width:2.00px;height:32.50px;background:#1f1f1f;"></div><div class="t" style="left:570.00px;top:202.00px;font-size:28px;line-height:28px;color:#a5a4a0;letter-spacing:0.260px;font-weight:400;">Search for a view...</div><div style="position:absolute;left:549.30px;top:275.00px;width:563.40px;height:55.70px;border-radius:8px;background:#efefee;"></div><div style="position:absolute;left:575.80px;top:291.40px;width:4.60px;height:4.60px;border-radius:50%;background:#acaba8;"></div><div style="position:absolute;left:575.80px;top:301.00px;width:4.60px;height:4.60px;border-radius:50%;background:#acaba8;"></div><div style="position:absolute;left:575.80px;top:310.80px;width:4.60px;height:4.60px;border-radius:50%;background:#acaba8;"></div><div style="position:absolute;left:585.40px;top:291.40px;width:4.60px;height:4.60px;border-radius:50%;background:#acaba8;"></div><div style="position:absolute;left:585.40px;top:301.00px;width:4.60px;height:4.60px;border-radius:50%;background:#acaba8;"></div><div style="position:absolute;left:585.40px;top:310.80px;width:4.60px;height:4.60px;border-radius:50%;background:#acaba8;"></div><div style="position:absolute;left:1058.80px;top:299.90px;width:6.20px;height:6.20px;border-radius:50%;background:#979694;"></div><div style="position:absolute;left:1069.80px;top:299.90px;width:6.20px;height:6.20px;border-radius:50%;background:#979694;"></div><div style="position:absolute;left:1080.70px;top:299.90px;width:6.20px;height:6.20px;border-radius:50%;background:#979694;"></div><div class="t" style="left:664.70px;top:290.00px;font-size:28px;line-height:28px;color:#32302c;letter-spacing:0.310px;font-weight:400;">Company Policies</div><div style="position:absolute;left:575.80px;top:347.30px;width:4.60px;height:4.60px;border-radius:50%;background:#acaba8;"></div><div style="position:absolute;left:575.80px;top:356.90px;width:4.60px;height:4.60px;border-radius:50%;background:#acaba8;"></div><div style="position:absolute;left:575.80px;top:366.70px;width:4.60px;height:4.60px;border-radius:50%;background:#acaba8;"></div><div style="position:absolute;left:585.40px;top:347.30px;width:4.60px;height:4.60px;border-radius:50%;background:#acaba8;"></div><div style="position:absolute;left:585.40px;top:356.90px;width:4.60px;height:4.60px;border-radius:50%;background:#acaba8;"></div><div style="position:absolute;left:585.40px;top:366.70px;width:4.60px;height:4.60px;border-radius:50%;background:#acaba8;"></div><div style="position:absolute;left:1058.80px;top:355.80px;width:6.20px;height:6.20px;border-radius:50%;background:#979694;"></div><div style="position:absolute;left:1069.80px;top:355.80px;width:6.20px;height:6.20px;border-radius:50%;background:#979694;"></div><div style="position:absolute;left:1080.70px;top:355.80px;width:6.20px;height:6.20px;border-radius:50%;background:#979694;"></div><div class="t" style="left:664.70px;top:346.00px;font-size:28px;line-height:28px;color:#32302c;letter-spacing:0.310px;font-weight:400;">Company Info</div><div style="position:absolute;left:575.80px;top:403.30px;width:4.60px;height:4.60px;border-radius:50%;background:#acaba8;"></div><div style="position:absolute;left:575.80px;top:412.90px;width:4.60px;height:4.60px;border-radius:50%;background:#acaba8;"></div><div style="position:absolute;left:575.80px;top:422.70px;width:4.60px;height:4.60px;border-radius:50%;background:#acaba8;"></div><div style="position:absolute;left:585.40px;top:403.30px;width:4.60px;height:4.60px;border-radius:50%;background:#acaba8;"></div><div style="position:absolute;left:585.40px;top:412.90px;width:4.60px;height:4.60px;border-radius:50%;background:#acaba8;"></div><div style="position:absolute;left:585.40px;top:422.70px;width:4.60px;height:4.60px;border-radius:50%;background:#acaba8;"></div><div style="position:absolute;left:1058.80px;top:411.80px;width:6.20px;height:6.20px;border-radius:50%;background:#979694;"></div><div style="position:absolute;left:1069.80px;top:411.80px;width:6.20px;height:6.20px;border-radius:50%;background:#979694;"></div><div style="position:absolute;left:1080.70px;top:411.80px;width:6.20px;height:6.20px;border-radius:50%;background:#979694;"></div><div class="t" style="left:664.70px;top:402.00px;font-size:28px;line-height:28px;color:#32302c;letter-spacing:0.310px;font-weight:400;">Tools & Systems</div><svg style="position:absolute;left:605.00px;top:282.00px;overflow:visible;" width="48.00" height="40.00" viewBox="0 0 48 40"><g fill="#32302c"><path d="M17.6,7.4 L24,11.2 L30.4,7.4" fill="none" stroke="#32302c" stroke-width="1.9" stroke-linecap="round" stroke-linejoin="round"/><circle cx="24" cy="13.6" r="3.1"/><path d="M17.3,27 V21.2 C17.3,17.6 20.3,15.4 24,15.4 C27.7,15.4 30.7,17.6 30.7,21.2 V27 Z"/><path d="M9.3,13.9 C6.3,14.0 5.5,17.4 7.6,20.0 L10.4,25.6 C10.7,26.4 11.3,26.6 12,26.6 L18.6,26.6 L18.6,19.8 L12.1,14.7 C11.4,14.2 10.4,13.9 9.3,13.9 Z"/><path d="M38.7,13.9 C41.7,14.0 42.5,17.4 40.4,20.0 L37.6,25.6 C37.3,26.4 36.7,26.6 36,26.6 L29.4,26.6 L29.4,19.8 L35.9,14.7 C36.6,14.2 37.6,13.9 38.7,13.9 Z"/><path d="M17.2,26.4 L24,35.6 L30.8,26.4 Z"/><rect x="20.4" y="20" width="7.3" height="3.3" fill="#efefee"/><path d="M20.3,27.4 L24,31.4 L27.7,27.4 Z" fill="#efefee"/></g></svg><svg style="position:absolute;left:614.50px;top:345.00px;overflow:visible;" width="28.50" height="28.50" viewBox="0 0 28 28"><circle cx="14" cy="14" r="14" fill="#32302c"/><circle cx="14.2" cy="7.6" r="2.3" fill="#ffffff"/><path d="M10.6,11.6 H15.8 V19.6 H17.6 V22 H10.6 V19.6 H12.6 V14 H10.6 Z" fill="#ffffff"/></svg><svg style="position:absolute;left:610.00px;top:400.00px;overflow:visible;" width="38.00" height="30.00" viewBox="610 400 38 30"><rect x="614" y="404.6" width="30" height="22" rx="3.4" fill="none" stroke="#32302c" stroke-width="3"/><path d="M614,411.8 H644 M614,419.2 H644 M629.2,404.6 V426.6" stroke="#32302c" stroke-width="2.6"/></svg><div style="position:absolute;left:541.00px;top:467.00px;width:580.50px;height:2.00px;background:#ededec;"></div><svg style="position:absolute;left:566.00px;top:490.00px;overflow:visible;" width="36.00" height="36.00" viewBox="566 490 36 36"><path d="M584.5,496 V521.6 M571.7,508.8 H597.3" stroke="#8f8e8a" stroke-width="2.4" stroke-linecap="round"/></svg><div class="t" style="left:620.70px;top:496.00px;font-size:28px;line-height:28px;color:#8f8e8a;letter-spacing:0.390px;font-weight:400;">Add view</div>
</body></html>
